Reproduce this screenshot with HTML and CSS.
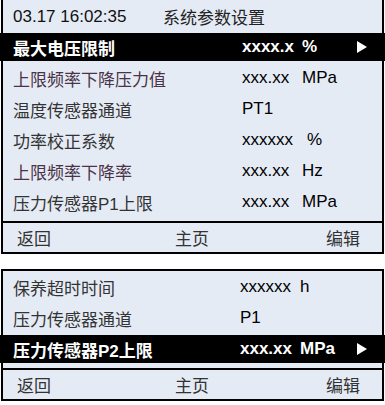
FILE: index.html
```html
<!DOCTYPE html>
<html lang="zh-CN">
<head>
    <meta charset="UTF-8">
    <meta name="viewport" content="width=device-width, initial-scale=1.0">
    <title>系统参数设置</title>
    <link rel="stylesheet" href="styles.css">
</head>
<body>
    <div class="panel panel-top">
        <div class="header">
            <span class="clock">03.17 16:02:35</span>
            <span class="title">系统参数设置</span>
        </div>
        <div class="rows">
            <div class="row selected">
                <span class="label">最大电压限制</span>
                <span class="value">xxxx.x</span>
                <span class="unit">%</span>
                <svg class="arrow" width="10" height="12" viewBox="0 0 10 12"><polygon points="0,0 10,6 0,12" fill="#fff"/></svg>
            </div>
            <div class="row">
                <span class="label alt">上限频率下降压力值</span>
                <span class="value">xxx.xx</span>
                <span class="unit">MPa</span>
            </div>
            <div class="row">
                <span class="label">温度传感器通道</span>
                <span class="value">PT1</span>
                <span class="unit"></span>
            </div>
            <div class="row">
                <span class="label">功率校正系数</span>
                <span class="value">xxxxxx</span>
                <span class="unit shift">%</span>
            </div>
            <div class="row">
                <span class="label alt">上限频率下降率</span>
                <span class="value">xxx.xx</span>
                <span class="unit">Hz</span>
            </div>
            <div class="row">
                <span class="label">压力传感器P1上限</span>
                <span class="value">xxx.xx</span>
                <span class="unit">MPa</span>
            </div>
        </div>
        <div class="footer">
            <span>返回</span>
            <span>主页</span>
            <span>编辑</span>
        </div>
    </div>

    <div class="panel panel-bottom">
        <div class="rows">
            <div class="row">
                <span class="label">保养超时时间</span>
                <span class="value">xxxxxx</span>
                <span class="unit">h</span>
            </div>
            <div class="row">
                <span class="label">压力传感器通道</span>
                <span class="value">P1</span>
                <span class="unit"></span>
            </div>
            <div class="row selected">
                <span class="label">压力传感器P2上限</span>
                <span class="value">xxx.xx</span>
                <span class="unit">MPa</span>
                <svg class="arrow" width="10" height="12" viewBox="0 0 10 12"><polygon points="0,0 10,6 0,12" fill="#fff"/></svg>
            </div>
        </div>
        <div class="footer">
            <span>返回</span>
            <span>主页</span>
            <span>编辑</span>
        </div>
    </div>
</body>
</html>
```

FILE: styles.css
```css
body {
    margin: 0;
    background: #fff;
    font-family: 'Liberation Sans', 'Noto Sans CJK SC', sans-serif;
    font-size: 17px;
    color: #000;
}

.panel {
    width: 379px;
    margin: 0 1px;
    border: 2px solid #000;
    background: #e5ebf5;
}

.panel-top {
    border-top: none;
}

.panel-bottom {
    margin-top: 15px;
    padding-top: 2px;
}

.header {
    height: 33px;
    display: flex;
    align-items: center;
    padding-left: 10px;
    color: #111;
}

.clock {
    width: 150px;
}

.title {
    color: #222;
}

.rows {
    padding-bottom: 2px;
}

.row {
    height: 28px;
    margin-bottom: 3px;
    display: grid;
    grid-template-columns: 229px 60px 1fr 12px;
    align-items: center;
    padding: 0 15px 0 10px;
    margin-left: -3px;
    margin-right: -3px;
    padding-left: 13px;
    padding-right: 18px;
}

.panel-bottom .row {
    grid-template-columns: 227px 60px 1fr 12px;
}

.label {
    color: #333;
    white-space: nowrap;
}

.label.alt {
    color: #4a3346;
}

.unit.shift {
    padding-left: 5px;
}

.row.selected {
    background: #000;
    color: #fff;
    font-weight: bold;
}

.row.selected .label {
    color: #fff;
}

.arrow {
    justify-self: end;
}

.footer {
    height: 29px;
    border-top: 2px solid #000;
    display: grid;
    grid-template-columns: 158px 1fr auto;
    align-items: center;
    padding: 0 22px 0 14px;
    color: #333;
}
```
